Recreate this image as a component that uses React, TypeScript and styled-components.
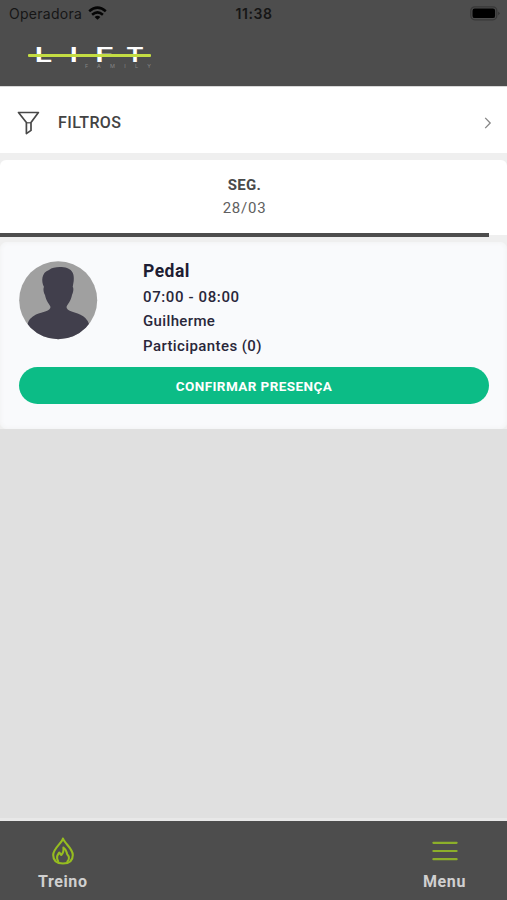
import React from 'react';
import styled, { createGlobalStyle } from 'styled-components';

const GlobalStyle = createGlobalStyle`
  * { box-sizing: border-box; }
  body { margin: 0; background: #e0e0e0; font-family: Roboto, "Liberation Sans", sans-serif; }
`;

const Screen = styled.div`
  width: 507px;
  height: 900px;
  display: flex;
  flex-direction: column;
  background: #e0e0e0;
  overflow: hidden;
`;

const Header = styled.header`
  height: 86px;
  flex: none;
  background: #4d4d4d;
`;

const StatusBar = styled.div`
  height: 27px;
  padding: 0 7px 0 9px;
  display: grid;
  grid-template-columns: 1fr auto 1fr;
  align-items: center;
  font-family: Inter, sans-serif;
  color: #161616;
`;

const Carrier = styled.div`
  display: flex;
  align-items: center;
  gap: 6px;
  font-size: 14px;
  letter-spacing: 0.28px;
`;

const Clock = styled.div`
  font-size: 14px;
  font-weight: 600;
  letter-spacing: 0.6px;
  margin-left: -1px;
`;

const BatterySlot = styled.div`
  display: flex;
  justify-content: flex-end;
  margin-top: -1px;
`;

const LogoSlot = styled.div`
  padding: 13px 0 0 24px;
  svg { display: block; }
`;

const Filters = styled.button`
  height: 67px;
  flex: none;
  border: 0;
  border-top: 1px solid #d8d8d8;
  padding: 5px 15px 0 17px;
  background: #fff;
  display: flex;
  align-items: center;
  text-align: left;
  color: #434343;
`;

const FilterLabel = styled.span`
  flex: 1;
  margin-left: 18px;
  font: 500 16px Roboto, sans-serif;
  letter-spacing: 0.4px;
`;

const Schedule = styled.main`
  flex: none;
  background: #efefef;
  padding-top: 7px;
`;

const DayCard = styled.section`
  height: 77px;
  background: linear-gradient(#fff 75px, #efefef 75px);
  border-radius: 6px 6px 0 0;
  display: flex;
  flex-direction: column;
  justify-content: space-between;
`;

const Day = styled.div`
  width: 489px;
  padding-top: 14px;
  text-align: center;
  color: #4a4a4a;
`;

const DayName = styled.div`
  font-size: 15px;
  line-height: 23px;
  font-weight: 700;
  letter-spacing: 0.3px;
`;

const DayDate = styled.div`
  font-size: 15px;
  line-height: 22px;
  letter-spacing: 0.75px;
  color: #606060;
`;

const Underline = styled.div`
  width: 489px;
  height: 4px;
  background: #4d4d4d;
`;

const ClassCard = styled.article`
  height: 187px;
  margin-top: 5px;
  padding: 19px 18px 0 19px;
  border-radius: 7px;
  background: #f9fafc;
  box-shadow: inset 0 0 5px #f0f1f1;
`;

const ClassInfo = styled.div`
  display: flex;
  gap: 45px;
  height: 106px;
`;

const Details = styled.div`
  color: #29273a;
  margin-top: -2px;
`;

const ClassTitle = styled.h2`
  margin: 0 0 1px;
  font-size: 17.5px;
  line-height: 24.5px;
  font-weight: 700;
  letter-spacing: 0.5px;
  color: #1e1d33;
`;

const DetailLine = styled.div<{ $spacing: number }>`
  font-size: 15px;
  line-height: 24.5px;
  font-weight: 500;
  letter-spacing: ${(p) => p.$spacing}px;
`;

const Confirm = styled.button`
  display: block;
  width: 100%;
  height: 37px;
  border: 0;
  padding: 0;
  border-radius: 19px;
  background: #0cbc86;
  color: #fff;
  font: 700 13.5px Roboto, sans-serif;
  letter-spacing: 0.42px;
`;

const Footer = styled.nav`
  height: 82px;
  flex: none;
  margin-top: auto;
  padding: 0 38px;
  border-top: 3px solid #e8e8e8;
  background: #4d4d4d;
  display: flex;
  justify-content: space-between;
`;

const Tab = styled.div<{ $shift?: number }>`
  display: flex;
  flex-direction: column;
  align-items: center;
  padding-top: 16px;
  margin-right: ${(p) => p.$shift ?? 0}px;
  color: #d0d0d0;
  font-size: 16px;
  font-weight: 700;
  line-height: 20px;
  letter-spacing: 0.6px;
  svg { display: block; margin-bottom: 7px; }
`;

const Wifi = () => (
  <svg width="19" height="15" viewBox="0 0 19 15" fill="none" stroke="#050505" strokeWidth="2.5">
    <path d="M1.2 5.3Q9.5-2 17.8 5.3M4.1 8.7Q9.5 4 14.9 8.7" />
    <path d="M9.5 13.8 6.6 11Q9.5 8.4 12.4 11Z" fill="#050505" stroke="none" />
  </svg>
);

const Battery = () => (
  <svg width="30" height="15" viewBox="0 0 30 15">
    <rect x=".8" y=".8" width="26" height="13" rx="4" fill="none" stroke="#383838" strokeWidth="1.3" />
    <rect x="2.5" y="2.5" width="22.6" height="9.6" rx="2.2" fill="#000" />
    <path d="M28.2 5.4Q31 7.3 28.2 9.2Z" fill="#343434" />
  </svg>
);

const letters = [
  { char: 'L', x: 10.4, width: 18 },
  { char: 'I', x: 45.5, width: 8.5 },
  { char: 'F', x: 71, width: 19 },
  { char: 'T', x: 102, width: 18 },
];

const Logo = () => (
  <svg width="132" height="34" viewBox="0 0 132 34">
    <g fill="#fff" fontFamily="Inter, sans-serif" fontSize="20.6" fontWeight="600">
      {letters.map((l) => (
        <text key={l.char} x={l.x} y="22.3" textLength={l.width} lengthAdjust="spacingAndGlyphs">{l.char}</text>
      ))}
    </g>
    <rect x="4" y="13.9" width="123" height="3.2" rx="1" fill="#c4dd43" />
    <text x="61" y="28" fill="#858585" fontFamily="Inter, sans-serif" fontSize="5.4" textLength="66">FAMILY</text>
  </svg>
);

const Funnel = () => (
  <svg width="23" height="24" viewBox="0 0 23 24" fill="none" stroke="#484848" strokeWidth="1.7" strokeLinejoin="round">
    <path d="M1.5 1.5H21.4L14 11.5V19.4L9.4 22.6V11.5Z" />
    <path d="M9.4 11.8H14" strokeWidth="1.2" />
  </svg>
);

const Chevron = () => (
  <svg width="8" height="12" viewBox="0 0 8 12" fill="none" stroke="#858585" strokeWidth="1.3">
    <path d="m1.2.9 5 5.1-5 5.1" />
  </svg>
);

const Avatar = () => (
  <svg width="79" height="79" viewBox="0 0 79 79">
    <defs><clipPath id="portrait"><circle cx="39.2" cy="39.2" r="39" /></clipPath></defs>
    <g clipPath="url(#portrait)">
      <rect width="79" height="79" fill="#a0a0a0" />
      <path fill="#413f4c" d="M30 9C34 5.5 43 5.5 48 7C54 9 55.3 14 54.7 20L53.7 26C55 27 54.2 32 53 34C52 40 48.5 43 47.5 46C47.5 50 55 51 61 53.5Q68 56.5 70 63L76 79H2L8.5 63Q10 57 17 53.5C24 51 31.5 50 31.5 46C30.5 43 27 40 26 34C24.5 32 24 27 25 26C22 20 22.5 11.5 30 9Z" />
    </g>
  </svg>
);

const Flame = () => (
  <svg width="22" height="28" viewBox="0 0 22 28" fill="none" stroke="#96bd20" strokeWidth="2.1" strokeLinejoin="round" strokeLinecap="round">
    <path d="M11 1.5C10 6 1.2 11.5 1.2 18C1.2 23.5 5 26.5 11 26.5S20.8 23.5 20.8 18C20.8 11.5 13 7 11 1.5Z" />
    <path d="M6.2 24.5C4 20 5.2 18.5 7.2 15.5L9.3 18C12 15.5 11.8 13.5 11.4 10.5C15 13 14.3 15 15.2 17.2C17.5 19.5 17.3 22.5 15.4 24.5" />
  </svg>
);

const MenuLines = () => (
  <svg width="26" height="28" viewBox="0 0 26 28" stroke="#8caf2a" strokeWidth="2.2" strokeLinecap="round">
    <path d="M1.4 5.8H24.6M1.4 14H24.6M1.4 22.2H24.6" />
  </svg>
);

export default function App() {
  return (
    <>
      <GlobalStyle />
      <Screen>
        <Header>
          <StatusBar>
            <Carrier>Operadora <Wifi /></Carrier>
            <Clock>11:38</Clock>
            <BatterySlot><Battery /></BatterySlot>
          </StatusBar>
          <LogoSlot><Logo /></LogoSlot>
        </Header>
        <Filters><Funnel /><FilterLabel>FILTROS</FilterLabel><Chevron /></Filters>
        <Schedule>
          <DayCard>
            <Day><DayName>SEG.</DayName><DayDate>28/03</DayDate></Day>
            <Underline />
          </DayCard>
          <ClassCard>
            <ClassInfo>
              <Avatar />
              <Details>
                <ClassTitle>Pedal</ClassTitle>
                <DetailLine $spacing={0.62}>07:00 - 08:00</DetailLine>
                <DetailLine $spacing={0.36}>Guilherme</DetailLine>
                <DetailLine $spacing={0.4}>Participantes (0)</DetailLine>
              </Details>
            </ClassInfo>
            <Confirm>CONFIRMAR PRESENÇA</Confirm>
          </ClassCard>
        </Schedule>
        <Footer>
          <Tab><Flame />Treino</Tab>
          <Tab $shift={3}><MenuLines />Menu</Tab>
        </Footer>
      </Screen>
    </>
  );
}
